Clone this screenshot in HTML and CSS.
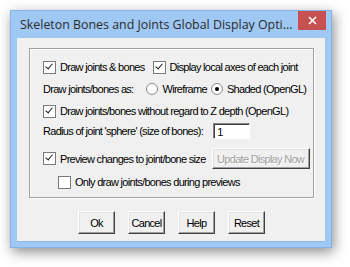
FILE: index.html
```html
<!DOCTYPE html>
<html>
<head>
<meta charset="utf-8">
<link rel="stylesheet" href="styles.css">
</head>
<body>
<div class="window">
  <div class="titlebar">
    <span class="title">Skeleton Bones and Joints Global Display Opti...</span>
    <span class="close">
      <svg width="9" height="9" viewBox="0 0 9 9"><path d="M1 1 L8 8 M8 1 L1 8" stroke="#fff" stroke-width="1.6"/></svg>
    </span>
  </div>
  <div class="client">
    <div class="group">
      <div class="row r1">
        <span class="chk on"></span><span class="lbl">Draw joints &amp; bones</span>
        <span class="chk on second"></span><span class="lbl">Display local axes of each joint</span>
      </div>
      <div class="row r2">
        <span class="lbl">Draw joints/bones as:</span>
        <span class="radio first"></span><span class="lbl">Wireframe</span>
        <span class="radio on second"></span><span class="lbl">Shaded (OpenGL)</span>
      </div>
      <div class="row r3">
        <span class="chk on"></span><span class="lbl">Draw joints/bones without regard to Z depth (OpenGL)</span>
      </div>
      <div class="row r4">
        <span class="lbl">Radius of joint 'sphere' (size of bones):</span>
        <span class="input">1</span>
      </div>
      <div class="row r5">
        <span class="chk on"></span><span class="lbl">Preview changes to joint/bone size</span>
        <span class="btn disabled update">Update Display Now</span>
      </div>
      <div class="row r6">
        <span class="chk"></span><span class="lbl">Only draw joints/bones during previews</span>
      </div>
    </div>
    <div class="buttons">
      <span class="btn">Ok</span>
      <span class="btn">Cancel</span>
      <span class="btn">Help</span>
      <span class="btn">Reset</span>
    </div>
  </div>
</div>
</body>
</html>
```
FILE: styles.css
```css
html, body {
  margin: 0;
  padding: 0;
  background: #ffffff;
}
body {
  width: 350px;
  height: 267px;
  overflow: hidden;
}
.window {
  margin: 10px 0 0 10px;
  width: 322px;
  height: 238px;
  box-sizing: border-box;
  background: #9fc8f5;
  border: 1px solid #86b3e6;
  box-shadow: 2px 4px 12px rgba(0,0,0,0.45);
  display: flex;
  flex-direction: column;
}
.titlebar {
  height: 27px;
  display: flex;
  align-items: flex-start;
}
.title {
  flex: 1;
  overflow: hidden;
  font-family: "Open Sans", "Noto Sans", sans-serif;
  font-size: 12.4px;
  color: #2b2b2b;
  margin: 5px 0 0 9px;
  white-space: nowrap;
}
.close {
  width: 28px;
  height: 19px;
  margin-right: 5px;
  background: #c75050;
  display: flex;
  align-items: center;
  justify-content: center;
  flex: none;
}
.client {
  margin: 0 6px 5px 6px;
  flex: 1;
  background: #f0f0f0;
  border: 1px solid #8fb6e0;
  border-width: 0 0 1px 0;
  display: flex;
  flex-direction: column;
  font-family: "Liberation Sans", Arial, sans-serif;
  font-size: 11px;
  letter-spacing: -0.7px;
  color: #000;
}
.group {
  margin: 10px 0 0 12px;
  width: 285px;
  height: 150px;
  box-sizing: border-box;
  border: 1px solid #a0a0a0;
  box-shadow: 1px 1px 0 #ffffff, inset 1px 1px 0 #ffffff;
  padding: 8px 0 0 13px;
  display: flex;
  flex-direction: column;
}
.row {
  display: flex;
  align-items: center;
  height: 20px;
  white-space: nowrap;
}
.r2, .r3 { margin-top: 2px; }
.r5 { margin-top: 7px; height: 21px; }
.r6 { margin-top: 3px; padding-left: 15px; }
.chk {
  width: 13px;
  height: 13px;
  box-sizing: border-box;
  border: 1px solid #7a7a7a;
  background: #fff;
  margin-right: 4px;
  flex: none;
  position: relative;
}
.chk.on::after {
  content: "";
  position: absolute;
  left: 3px;
  top: 0px;
  width: 3px;
  height: 6px;
  border: solid #1a1a1a;
  border-width: 0 1.5px 1.5px 0;
  transform: rotate(40deg);
}
.chk.second { margin-left: 8px; }
.radio {
  width: 12px;
  height: 12px;
  box-sizing: border-box;
  border: 1px solid #8a8a8a;
  border-radius: 50%;
  background: #fff;
  margin-right: 4px;
  flex: none;
  position: relative;
}
.radio.on::after {
  content: "";
  position: absolute;
  left: 3px;
  top: 3px;
  width: 4px;
  height: 4px;
  border-radius: 50%;
  background: #000;
}
.radio.first { margin-left: 13px; }
.radio.second { margin-left: 4px; }
.input {
  margin-left: 10px;
  width: 37px;
  height: 16px;
  box-sizing: border-box;
  background: #fff;
  border: 1px solid;
  border-color: #828282 #ffffff #ffffff #828282;
  box-shadow: inset 1px 1px 0 #404040;
  padding: 2px 0 0 3px;
  line-height: 12px;
}
.btn {
  display: flex;
  align-items: center;
  justify-content: center;
  width: 37px;
  height: 23px;
  box-sizing: border-box;
  border: 1px solid;
  border-color: #ffffff #404040 #404040 #ffffff;
  box-shadow: inset -1px -1px 0 #a0a0a0, inset 1px 1px 0 #e3e3e3;
  background: #f0f0f0;
}
.btn.update {
  width: 98px;
  height: 21px;
  margin-left: 6px;
}
.btn.disabled {
  color: #a0a0a0;
  text-shadow: 1px 1px 0 #ffffff;
}
.buttons {
  display: flex;
  gap: 13px;
  margin: 13px 0 0 61px;
}
```
